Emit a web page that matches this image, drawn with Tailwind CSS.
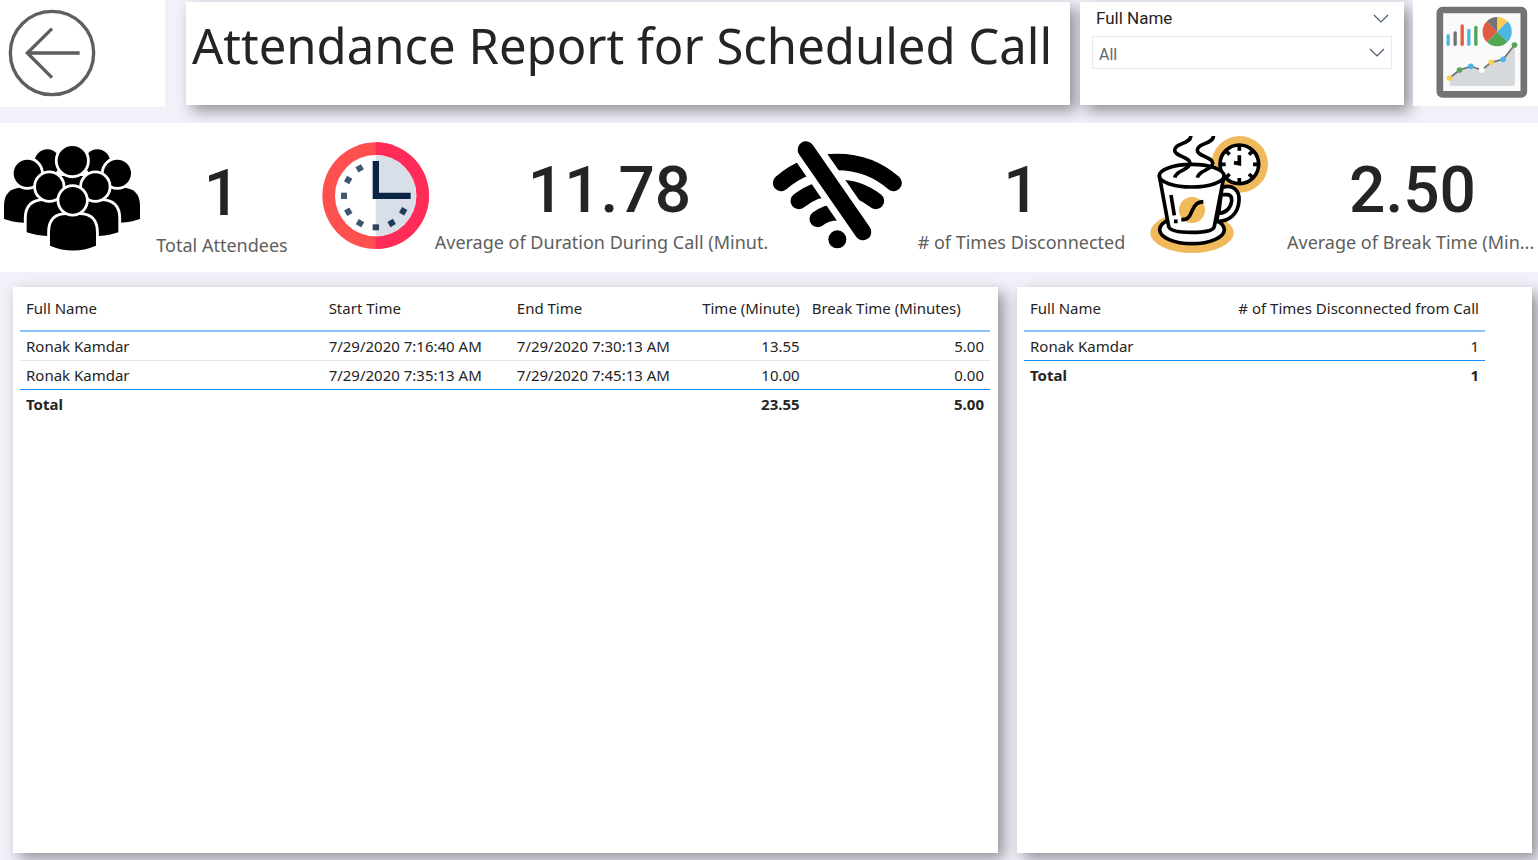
<!DOCTYPE html>
<html lang="en">
<head>
<meta charset="utf-8">
<meta name="viewport" content="width=device-width, initial-scale=1">
<title>Attendance Report for Scheduled Call</title>
<script src="https://cdn.jsdelivr.net/npm/@tailwindcss/browser@4"></script>
</head>
<body class="flex min-h-screen flex-col overflow-x-hidden bg-[#f3f0fa] font-['Noto_Sans',sans-serif] text-[#252423]">

<header class="flex items-start pb-4">
  <div class="mr-[21px] w-[165px] shrink-0 bg-white pt-[9px] pr-2 pb-2.5 pl-2">
    <button type="button" aria-label="Back" class="block size-[88px] cursor-pointer">
      <svg viewBox="24 27 264 264" class="size-full" fill="none" stroke="#605e5c" stroke-width="10">
        <circle cx="156" cy="159" r="125"/>
        <path d="M239 159H82M156 86L82 159L156 233"/>
      </svg>
    </button>
  </div>
  <div class="mt-0.5 mr-2.5 min-h-[103px] flex-1 bg-white px-1.5 pt-[7px] shadow-[6px_6px_14px_rgba(0,0,0,0.4)]">
    <h1 class="text-[49px] leading-[72px] whitespace-nowrap">Attendance Report for Scheduled Call</h1>
  </div>
  <div class="mt-0.5 mr-[9px] min-h-[103px] w-[324px] shrink-0 bg-white px-3 pt-[5px] font-[Roboto,sans-serif] shadow-[6px_6px_14px_rgba(0,0,0,0.4)]">
    <div class="flex h-6 items-center justify-between pr-[3px] pl-1">
      <label for="name" class="text-[17px]">Full Name</label>
      <svg viewBox="0 0 16 10" class="h-2.5 w-4" fill="none" stroke="#4a5a6a" stroke-width="1.2"><path d="M1 1L8 8L15 1"/></svg>
    </div>
    <div class="relative mt-[5px]">
      <select id="name" class="h-[33px] w-full appearance-none border border-[#eaeaea] bg-white px-1.5 pt-1 text-base text-[#666] outline-none">
        <option>All</option>
        <option>Ronak Kamdar</option>
      </select>
      <svg viewBox="0 0 16 10" class="pointer-events-none absolute top-3 right-[7px] h-2.5 w-4" fill="none" stroke="#4a5a6a" stroke-width="1.2"><path d="M1 1L8 8L15 1"/></svg>
    </div>
  </div>
  <div class="relative w-[125px] shrink-0 bg-white pt-1.5 pb-2 pl-[23px]">
    <svg viewBox="34 18 275 276" class="h-[92px] w-[92px]" role="img" aria-label="Report">
      <rect x="45" y="30" width="252" height="253" rx="8" fill="#fafafa" stroke="#737373" stroke-width="20"/>
      <g stroke-width="10" stroke-linecap="round">
        <path d="M70 107V133M132 91V133" stroke="#4db6e2"/>
        <path d="M91 99V133" stroke="#737373"/>
        <path d="M112 78V133" stroke="#e05b42"/>
        <path d="M153 82V133" stroke="#53a654"/>
      </g>
      <path d="M217 95V51A44 44 0 0 1 248 64Z" fill="#fcd04f"/>
      <path d="M217 95L248 64A44 44 0 0 1 248 126Z" fill="#4db6e2"/>
      <path d="M217 95L248 126A44 44 0 0 1 186 126Z" fill="#53a654"/>
      <path d="M217 95L186 126A44 44 0 0 1 186 64Z" fill="#e05b42"/>
      <path d="M217 95L186 64A44 44 0 0 1 217 51Z" fill="#737373"/>
      <path d="M74 234L104 210L138 199L171 210L199 187L235 178L270 135V252Q270 258 264 258H80Q74 258 74 252Z" fill="#d5d9dc"/>
      <path d="M74 234L104 210L138 199L171 210L199 187L235 178L269 135" fill="none" stroke="#737373" stroke-width="5"/>
      <circle cx="74" cy="234" r="8.500" fill="#fcd04f"/><circle cx="199" cy="187" r="8.500" fill="#fcd04f"/>
      <circle cx="104" cy="210" r="8.500" fill="#53a654"/><circle cx="269" cy="135" r="8.500" fill="#53a654"/>
      <circle cx="138" cy="199" r="8.500" fill="#4db6e2"/><circle cx="235" cy="178" r="8.500" fill="#4db6e2"/>
      <circle cx="171" cy="210" r="8.500" fill="#fff"/>
    </svg>
  </div>
</header>

<section aria-label="Key figures" class="relative grid grid-cols-[318fr_452fr_376fr_392fr] bg-white pt-[13px] pb-3.5">
  <div class="flex min-w-0">
    <svg viewBox="0 33 432 360" class="h-[120px] w-36 shrink-0" role="img" aria-label="Attendees">
      <g fill="#000" stroke="#fff" stroke-width="17" paint-order="stroke">
        <circle cx="142" cy="112" r="39"/><circle cx="292" cy="112" r="39"/>
        <path d="M12 282V243Q12 188 66 188H130V293H70Q36 291 12 282Z"/>
        <path d="M420 282V243Q420 188 366 188H302V293H362Q396 291 420 282Z"/>
        <circle cx="82" cy="145" r="41"/><circle cx="352" cy="145" r="41"/>
        <path d="M170 153H264V230H170Z"/>
        <circle cx="217" cy="107" r="44"/>
        <path d="M80 322V280Q80 228 134 228H200V333H142Q106 331 80 322Z"/>
        <path d="M355 322V280Q355 228 301 228H235V333H297Q330 331 355 322Z"/>
        <circle cx="148" cy="185" r="40"/><circle cx="286" cy="185" r="40"/>
        <path d="M150 362V322Q150 270 200 270H238Q288 270 288 322V362Q219 391 150 362Z"/>
        <circle cx="218" cy="226" r="40"/>
      </g>
    </svg>
    <div class="w-[156px] pt-5 text-center">
      <p class="font-[Roboto,sans-serif] text-[64px] leading-[76px] font-medium">1</p>
      <p class="text-lg leading-[26px] whitespace-nowrap text-[#605e5c]">Total Attendees</p>
    </div>
  </div>
  <div class="flex min-w-0">
    <svg viewBox="24 33 345 360" class="h-[120px] w-[115px] shrink-0" role="img" aria-label="Duration">
      <circle cx="197" cy="212" r="160" fill="#ff5050"/>
      <path d="M197 52A160 160 0 0 1 197 372Z" fill="#ff2c5a"/>
      <circle cx="197" cy="212" r="122" fill="#fff"/>
      <path d="M197 90A122 122 0 0 1 197 334Z" fill="#d9dfe8"/>
      <g fill="#40566f">
        <path d="M188 298H207V316H188Z" fill="#2b4460"/>
        <path d="M188 298H207V316H188Z" transform="rotate(30 197 212)"/>
        <path d="M188 298H207V316H188Z" transform="rotate(60 197 212)"/>
        <path d="M188 298H207V316H188Z" transform="rotate(90 197 212)"/>
        <path d="M188 298H207V316H188Z" transform="rotate(120 197 212)"/>
        <path d="M188 298H207V316H188Z" transform="rotate(150 197 212)"/>
        <path d="M188 298H207V316H188Z" transform="rotate(-30 197 212)" fill="#243b57"/>
        <path d="M188 298H207V316H188Z" transform="rotate(-60 197 212)" fill="#243b57"/>
      </g>
      <path d="M188 108H207V203H302V222H188Z" fill="#0a2443"/>
    </svg>
    <div class="min-w-0 flex-1 pt-[17px] text-center">
      <p class="pl-4 font-[Roboto,sans-serif] text-[64px] leading-[76px] font-medium">11.78</p>
      <p class="overflow-hidden text-lg leading-[26px] whitespace-nowrap text-[#605e5c]">Average of Duration During Call (Minut.</p>
    </div>
  </div>
  <div class="flex min-w-0">
    <svg viewBox="15 33 405 360" class="h-[120px] w-[135px] shrink-0" role="img" aria-label="Disconnected">
      <g fill="none" stroke="#000" stroke-width="49" stroke-linecap="round">
        <path d="M48 174A258 258 0 0 1 386 174"/>
        <path d="M101 228A188 188 0 0 1 333 228"/>
        <path d="M158 282A97 97 0 0 1 276 282"/>
        <path d="M107 50L311 346" stroke="#fff" stroke-width="90" stroke-linecap="butt"/>
        <path d="M123 74L294 321" stroke-width="50"/>
      </g>
      <circle cx="217" cy="343" r="27"/>
    </svg>
    <div class="min-w-0 flex-1 pt-[17px] pr-3 pl-1 text-center">
      <p class="font-[Roboto,sans-serif] text-[64px] leading-[76px] font-medium">1</p>
      <p class="text-lg leading-[26px] whitespace-nowrap text-[#605e5c]"># of Times Disconnected</p>
    </div>
  </div>
  <div class="flex min-w-0">
    <svg viewBox="18 33 375 360" class="h-[120px] w-[125px] shrink-0" role="img" aria-label="Break">
      <ellipse cx="156" cy="323" rx="125" ry="61" fill="#f0b95c"/>
      <circle cx="299" cy="118" r="85" fill="#f0b95c"/>
      <g fill="#fff" stroke="#000" stroke-width="11">
        <circle cx="298" cy="118" r="58"/>
        <path d="M298 62V77M298 159V174M242 118H257M339 118H354M258 78L269 89M338 78L327 89M258 158L269 147M338 158L327 147"/>
        <path d="M298 91V116L282 113" fill="none"/>
        <ellipse cx="156" cy="314" rx="97" ry="42"/>
        <path d="M246 188C278 176 300 196 297 228C294 266 270 288 230 290Z"/>
        <path d="M243 209H261C276 209 278 224 272 240C265 257 252 264 236 265Z"/>
        <path d="M58 153L86 304Q90 322 156 322Q220 322 223 304L252 153Z" stroke-linejoin="round"/>
        <ellipse cx="155" cy="152" rx="97" ry="34"/>
      </g>
      <circle cx="156" cy="255" r="39" fill="#f0b95c"/>
      <g fill="none" stroke="#000" stroke-width="11">
        <path d="M124 284C150 284 150 268 158 254C166 236 172 232 190 230M93 210L103 271M102 289H113"/>
        <path d="M153 33C150 58 104 54 104 76C104 94 152 96 150 115C148 136 109 134 104 158M221 33C218 58 172 54 172 76C172 94 220 96 218 115C216 136 177 134 172 158"/>
      </g>
    </svg>
    <div class="min-w-0 flex-1 pt-[17px] pl-4">
      <p class="text-center font-[Roboto,sans-serif] text-[64px] leading-[76px] font-medium">2.50</p>
      <p class="overflow-hidden text-lg leading-[26px] whitespace-nowrap text-[#605e5c]">Average of Break Time (Min...</p>
    </div>
  </div>
</section>

<main class="grid flex-1 grid-cols-[985fr_515fr] gap-[19px] pt-[15px] pr-1.5 pb-[7px] pl-[13px]">
  <section aria-label="Call log" class="bg-white pt-1.5 pr-2 pl-[7px] shadow-[6px_6px_14px_rgba(0,0,0,0.4)]">
    <table class="w-full table-fixed border-collapse text-[15px] leading-5 whitespace-nowrap">
      <colgroup><col class="w-[31.2%]"><col class="w-[19.4%]"><col class="w-[18.4%]"><col class="w-[12%]"><col class="w-[19%]"></colgroup>
      <thead>
        <tr class="h-[38px] border-b-2 border-[#86c3fb] text-left align-top">
          <th scope="col" class="px-1.5 pt-[5px] font-normal">Full Name</th>
          <th scope="col" class="px-1.5 pt-[5px] font-normal">Start Time</th>
          <th scope="col" class="px-1.5 pt-[5px] font-normal">End Time</th>
          <th scope="col" class="px-1.5 pt-[5px] text-right font-normal">Time (Minute)</th>
          <th scope="col" class="px-1.5 pt-[5px] font-normal">Break Time (Minutes)</th>
        </tr>
      </thead>
      <tbody>
        <tr class="border-b border-[#e6e6e6]">
          <td class="px-1.5 py-1">Ronak Kamdar</td><td class="px-1.5 py-1">7/29/2020 7:16:40 AM</td><td class="px-1.5 py-1">7/29/2020 7:30:13 AM</td><td class="px-1.5 py-1 text-right">13.55</td><td class="px-1.5 py-1 text-right">5.00</td>
        </tr>
        <tr class="border-b border-[#118dff]">
          <td class="px-1.5 py-1">Ronak Kamdar</td><td class="px-1.5 py-1">7/29/2020 7:35:13 AM</td><td class="px-1.5 py-1">7/29/2020 7:45:13 AM</td><td class="px-1.5 py-1 text-right">10.00</td><td class="px-1.5 py-1 text-right">0.00</td>
        </tr>
      </tbody>
      <tfoot>
        <tr class="font-bold"><th scope="row" class="px-1.5 py-1 text-left">Total</th><td></td><td></td><td class="px-1.5 py-1 text-right">23.55</td><td class="px-1.5 py-1 text-right">5.00</td></tr>
      </tfoot>
    </table>
  </section>
  <section aria-label="Disconnections" class="bg-white pt-1.5 pr-[47px] pl-[7px] shadow-[6px_6px_14px_rgba(0,0,0,0.4)]">
    <table class="w-full table-fixed border-collapse text-[15px] leading-5 whitespace-nowrap">
      <colgroup><col class="w-[43%]"><col class="w-[57%]"></colgroup>
      <thead>
        <tr class="h-[38px] border-b-2 border-[#86c3fb] text-left align-top">
          <th scope="col" class="px-1.5 pt-[5px] font-normal">Full Name</th>
          <th scope="col" class="px-1.5 pt-[5px] text-right font-normal"># of Times Disconnected from Call</th>
        </tr>
      </thead>
      <tbody>
        <tr class="border-b border-[#118dff]"><td class="px-1.5 py-1">Ronak Kamdar</td><td class="px-1.5 py-1 text-right">1</td></tr>
      </tbody>
      <tfoot>
        <tr class="font-bold"><th scope="row" class="px-1.5 py-1 text-left">Total</th><td class="px-1.5 py-1 text-right">1</td></tr>
      </tfoot>
    </table>
  </section>
</main>
</body>
</html>
